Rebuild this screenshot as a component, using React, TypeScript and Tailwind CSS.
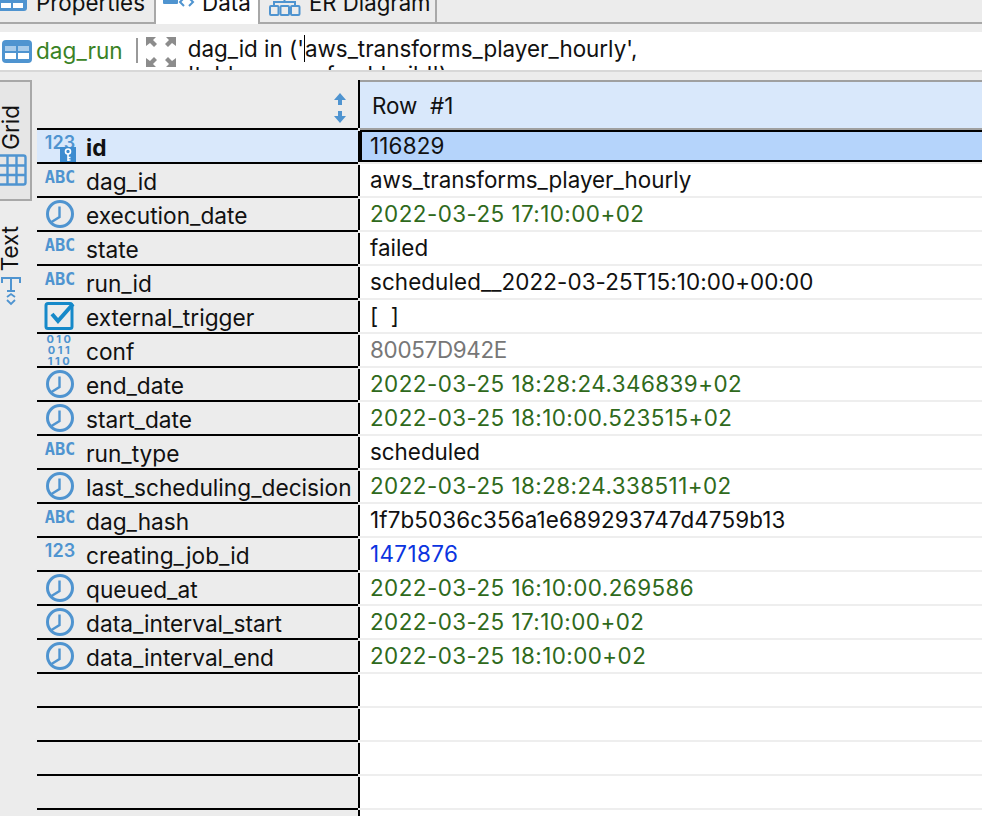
const FONT = "font-['Inter',sans-serif]";

type Kind = 'num' | 'key' | 'abc' | 'clock' | 'check' | 'bin';

const TS = 'text-[#2f6a1c] tracking-[0.45px]';

const rows: { name: string; kind: Kind; value: string; color: string }[] = [
  { name: 'id', kind: 'key', value: '116829', color: 'text-[#111] tracking-[0.2px]' },
  { name: 'dag_id', kind: 'abc', value: 'aws_transforms_player_hourly', color: 'text-[#111]' },
  { name: 'execution_date', kind: 'clock', value: '2022-03-25 17:10:00+02', color: TS },
  { name: 'state', kind: 'abc', value: 'failed', color: 'text-[#111]' },
  { name: 'run_id', kind: 'abc', value: 'scheduled__2022-03-25T15:10:00+00:00', color: 'text-[#111] tracking-[0.1px]' },
  { name: 'external_trigger', kind: 'check', value: '[  ]', color: 'text-[#111]' },
  { name: 'conf', kind: 'bin', value: '80057D942E', color: 'text-[#777] -tracking-[0.3px]' },
  { name: 'end_date', kind: 'clock', value: '2022-03-25 18:28:24.346839+02', color: TS },
  { name: 'start_date', kind: 'clock', value: '2022-03-25 18:10:00.523515+02', color: TS },
  { name: 'run_type', kind: 'abc', value: 'scheduled', color: 'text-[#111]' },
  { name: 'last_scheduling_decision', kind: 'clock', value: '2022-03-25 18:28:24.338511+02', color: TS },
  { name: 'dag_hash', kind: 'abc', value: '1f7b5036c356a1e689293747d4759b13', color: 'text-[#111] tracking-[0.12px]' },
  { name: 'creating_job_id', kind: 'num', value: '1471876', color: 'text-[#0b34e0] tracking-[0.4px]' },
  { name: 'queued_at', kind: 'clock', value: '2022-03-25 16:10:00.269586', color: TS },
  { name: 'data_interval_start', kind: 'clock', value: '2022-03-25 17:10:00+02', color: TS },
  { name: 'data_interval_end', kind: 'clock', value: '2022-03-25 18:10:00+02', color: TS },
];

function TypeIcon({ kind }: { kind: Kind }) {
  if (kind === 'clock') {
    return (
      <svg width="30" height="30" viewBox="0 0 30 30" fill="none" stroke="#4f94d0" strokeWidth="3">
        <circle cx="15" cy="15" r="12.5" />
        <path d="M14.5 7.5V18L6.5 23" strokeWidth="2.4" />
      </svg>
    );
  }
  if (kind === 'check') {
    return (
      <svg width="32" height="30" viewBox="0 0 32 30" fill="none">
        <rect x="2" y="2.5" width="26" height="25" rx="2" stroke="#1689c9" strokeWidth="3" />
        <path d="M8 13l6 7L29 3" stroke="#1689c9" strokeWidth="4" />
      </svg>
    );
  }
  if (kind === 'abc') {
    return <span className="-mt-[5px] font-['DejaVu_Sans_Mono',monospace] text-[17px] leading-none font-bold text-[#4f94d0]">ABC</span>;
  }
  if (kind === 'bin') {
    return (
      <span className="text-center text-[11px] leading-[11px] font-bold tracking-[2.5px] text-[#4f94d0]">
        010
        <br />
        011
        <br />
        110
      </span>
    );
  }
  return (
    <span className="relative flex h-full w-full items-center justify-center">
      <span className="-mt-[6px] text-[18px] leading-none font-semibold text-[#4f94d0]">123</span>
      {kind === 'key' && (
        <span className="absolute left-[23px] top-[17px] flex h-[15px] w-[16px] items-start justify-center bg-[#3d8cd0] pt-[1px]">
          <svg width="10" height="14" viewBox="0 0 10 14" fill="none" stroke="white" strokeWidth="1.6">
            <circle cx="5" cy="3.5" r="2.5" />
            <path d="M5 6v7M5 9.5h2.5M5 12h2.5" />
          </svg>
        </span>
      )}
    </span>
  );
}

function VLine() {
  return <div className="mt-[1px] h-[31px] w-[2px] shrink-0 bg-black" />;
}

function Row({ name, kind, value, color, selected }: { name: string; kind: Kind; value: string; color: string; selected: boolean }) {
  return (
    <div className="flex h-[34px] shrink-0">
      <div className={`flex w-[321px] items-center border-b-2 border-black ${selected ? 'bg-[#d9e8fb]' : 'bg-[#ececec]'}`}>
        <div className="flex h-full w-[46px] shrink-0 items-center justify-center">
          <TypeIcon kind={kind} />
        </div>
        <span className={`ml-[3px] mt-[5px] text-[22.7px] leading-none text-[#111] ${selected ? 'font-bold' : ''}`}>{name}</span>
      </div>
      <VLine />
      {selected ? (
        <div className="flex h-[32px] flex-1 items-center border-y-2 border-l-2 border-black bg-[#b5d4fb] pl-[8px]">
          <span className={`text-[22.4px] leading-none whitespace-pre ${color}`}>{value}</span>
        </div>
      ) : (
        <div className="flex flex-1 items-center border-b-2 border-[#eeeeee] bg-white pl-[10px]">
          <span className={`text-[22.4px] leading-none whitespace-pre ${color}`}>{value}</span>
        </div>
      )}
    </div>
  );
}

export default function App() {
  return (
    <div className={`flex h-[816px] w-[982px] flex-col overflow-hidden bg-[#ececec] ${FONT}`}>
      {/* tabs */}
      <div className="flex h-[24px] shrink-0 border-b-2 border-[#a8a8a8]">
        <div className="flex h-[22px] w-[156px] items-end overflow-hidden border-r-2 border-[#a8a8a8]">
          <svg width="28" height="22" viewBox="0 0 28 22" className="shrink-0">
            <rect x="-3" y="-10" width="30" height="21" rx="3" fill="#4f94d0" />
            <rect x="1" y="3" width="10" height="5" fill="#fff" />
            <rect x="13" y="3" width="10" height="5" fill="#fff" />
          </svg>
          <span className="mb-[8px] ml-[8px] text-[22.4px] leading-none text-[#111]">Properties</span>
        </div>
        <div className="z-10 flex h-[24px] w-[102px] items-end overflow-hidden bg-white pl-[7px]">
          <svg width="32" height="22" viewBox="0 0 32 22" className="mb-[10px] shrink-0" fill="none">
            <rect x="0" y="0" width="15" height="12" rx="1" fill="#4f94d0" />
            <path d="M21 6l-4 4 4 4M26 6l4 4-4 4" stroke="#4f94d0" strokeWidth="2" />
          </svg>
          <span className="mb-[10px] ml-[7px] text-[22.4px] leading-none text-[#111]">Data</span>
        </div>
        <div className="flex h-[22px] w-[179px] items-end overflow-hidden border-x-2 border-[#a8a8a8] pl-[9px]">
          <svg width="32" height="22" viewBox="0 0 32 22" className="mb-[6px] shrink-0" fill="none" stroke="#4f94d0" strokeWidth="2">
            <rect x="10" y="0" width="11" height="4" />
            <path d="M15.5 4v4M5 13V8h21v5" />
            <rect x="1" y="12" width="8.5" height="9" rx="1" />
            <rect x="11.5" y="12" width="8.5" height="9" rx="1" />
            <rect x="22" y="12" width="8.5" height="9" rx="1" />
          </svg>
          <span className="mb-[8px] ml-[8px] text-[22.2px] leading-none text-[#111]">ER Diagram</span>
        </div>
      </div>

      {/* filter bar */}
      <div className="mt-[8px] flex h-[38px] shrink-0 items-start overflow-hidden bg-white">
        <svg width="30" height="24" viewBox="0 0 30 24" className="ml-[2px] mt-[8px] shrink-0">
          <rect width="30" height="23" rx="4" fill="#4f94d0" />
          <rect x="3" y="6" width="11" height="5" fill="#a8cbea" />
          <rect x="16" y="6" width="11" height="5" fill="#a8cbea" />
          <rect x="3" y="13" width="11" height="6" fill="#fff" />
          <rect x="16" y="13" width="11" height="6" fill="#fff" />
        </svg>
        <span className="ml-[4px] mt-[6px] text-[22.6px] leading-[26px] text-[#3a8225]">dag_run</span>
        <div className="ml-[13px] mt-[6px] h-[25px] w-[2px] bg-[#999]" />
        <svg width="30" height="30" viewBox="0 0 30 30" className="ml-[8px] mt-[5px] shrink-0" fill="#8c8c8c">
          <path d="M0 0h10L7 3l4 4-3 3-4-4-4 3zM30 0H20l3 3-4 4 3 3 4-4 4 3zM0 30h10l-3-3 4-4-3-3-4 4-4-3zM30 30H20l3-3-4-4 3-3 4 4 4-3z" />
        </svg>
        <div className="ml-[12px] mt-[4px] text-[22.4px] leading-[26px] whitespace-pre text-[#111]">
          <div>
            dag_id in ('<span className="border-l border-black">aws_transforms_player_hourly',</span>
          </div>
          <div>'table_name_freshbuild')</div>
        </div>
      </div>

      <div className="h-[2px] shrink-0 bg-[#d8d8d8]" />

      {/* main */}
      <div className="flex flex-1 overflow-hidden pt-[8px]">
        <div className="w-[37px] shrink-0">
          <div className="flex h-[121px] w-[32px] flex-col items-start justify-between overflow-hidden border-y-2 border-r-2 border-[#a8a8a8] bg-[#e6e6e6] pb-[13px]">
            <span className="mt-[23px] rotate-180 text-[22.4px] leading-none text-[#111] [writing-mode:vertical-rl]">Grid</span>
            <svg width="30" height="32" viewBox="0 0 30 32" fill="none" stroke="#4f94d0" strokeWidth="2.4" className="-ml-[3px] shrink-0">
              <rect x="1.5" y="1.5" width="27" height="29" rx="2" />
              <path d="M1 11.5h28M1 21h28M10.5 1v30M19.5 1v30" />
            </svg>
          </div>
          <div className="mt-[25px] flex w-[21px] flex-col items-center">
            <span className="rotate-180 text-[22.4px] leading-none text-[#111] [writing-mode:vertical-rl]">Text</span>
            <svg width="22" height="30" viewBox="0 0 22 30" fill="none" stroke="#4f94d0" strokeWidth="2" className="mt-[5px] shrink-0">
              <path d="M2 7V2h18v5" />
              <path d="M11 2v13M7 15h8" />
              <path d="M7 21l4-3 4 3M7 24l4 4 4-4" strokeWidth="1.8" />
            </svg>
          </div>
        </div>

        <div className="flex flex-1 flex-col">
          <div className="flex h-[50px] shrink-0">
            <div className="flex w-[321px] items-center justify-end border-b-2 border-black pr-[11px] pt-[8px]">
              <svg width="14" height="30" viewBox="0 0 14 30" fill="#4f94d0">
                <path d="M7 0l6 7H9v5H5V7H1zM7 30l6-7H9v-5H5v5H1z" />
              </svg>
            </div>
            <div className="h-[48px] w-[2px] shrink-0 bg-black" />
            <div className="flex flex-1 items-center border-y-2 border-[#a0a0a0] bg-[#d9e8fb] pl-[12px] pt-[3px]">
              <span className="text-[22.4px] leading-none whitespace-pre text-[#111]">Row  #1</span>
            </div>
          </div>
          {rows.map((r, i) => (
            <Row key={r.name} {...r} selected={i === 0} />
          ))}
          {[1, 2, 3, 4].map((n) => (
            <div key={n} className="flex h-[34px] shrink-0">
              <div className="w-[321px] border-b-2 border-black bg-[#ececec]" />
              <VLine />
              <div className="flex-1 border-b-2 border-[#eeeeee] bg-white" />
            </div>
          ))}
          <div className="flex flex-1">
            <div className="w-[321px] bg-[#ececec]" />
            <div className="w-[2px] shrink-0 bg-black" />
            <div className="flex-1 bg-white" />
          </div>
        </div>
      </div>
    </div>
  );
}
